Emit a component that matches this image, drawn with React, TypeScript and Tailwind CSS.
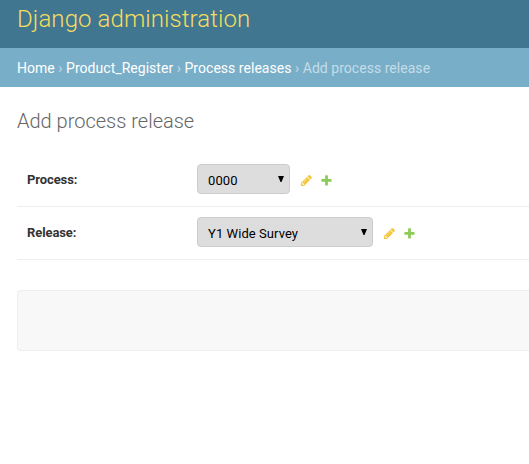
import React from "react";

function Pencil() {
  return (
    <svg width="13" height="13" viewBox="0 0 1792 1792" fill="#f4c53d" className="block">
      <path transform="translate(0 -10)" d="M491 1536l91-91-235-235-91 91v107h128v128h107zm523-928q0-22-22-22-10 0-17 7l-542 542q-7 7-7 17 0 22 22 22 10 0 17-7l542-542q7-7 7-17zm-54-192l416 416-832 832H128v-416zm683 96q0 53-37 90l-166 166-416-416 166-165q36-38 90-38 53 0 91 38l235 234q37 39 37 91z" />
    </svg>
  );
}

function Plus() {
  return (
    <svg width="13" height="13" viewBox="0 0 1792 1792" fill="#8ccb56" className="block">
      <path d="M1600 796v192q0 40-28 68t-68 28h-416v416q0 40-28 68t-68 28H800q-40 0-68-28t-28-68v-416H288q-40 0-68-28t-28-68V796q0-40 28-68t68-28h416V284q0-40 28-68t68-28h192q40 0 68 28t28 68v416h416q40 0 68 28t28 68z" />
    </svg>
  );
}

function Row({ label, value, width }: { label: string; value: string; width: string }) {
  return (
    <div className="flex h-[53px] items-start border-b border-[#eee] pl-[10px] pt-[10px]">
      <div className="w-[170px] pt-[7px] text-[13px] font-bold leading-[18px] tracking-[-0.1px] text-[#333]">{label}</div>
      <div className={`${width} flex h-[30px] items-center justify-between rounded-[4px] border border-[#ccc] bg-[#ddd] pl-[10px] pr-[5px] text-[13px] text-black`}>
        <span className="pt-[3px] leading-[18px] tracking-[0.07px]">{value}</span>
        <svg width="6" height="6" viewBox="0 0 6 6" className="mb-px"><path d="M0 0h6L3.5 6h-1z" /></svg>
      </div>
      <div className="flex gap-[7px] pl-[10px] pt-[10px]"><Pencil /><Plus /></div>
    </div>
  );
}

export default function App() {
  return (
    <div className="h-[464px] w-[529px] overflow-hidden bg-white font-['Roboto',sans-serif]">
      <header className="h-[48px] bg-[#417690] pl-[17px] pt-[4px] text-[24px] font-light leading-[30px] tracking-[0.09px] text-[#f5dd5d]">Django administration</header>
      <nav className="h-[39px] whitespace-pre bg-[#79aec8] pl-[17px] pt-[11px] text-[14px] leading-[18px] tracking-[0.035px] text-[#c4dce8]">
        <span className="text-white">Home</span> › <span className="text-white">Product_Register</span> › <span className="text-white">Process releases</span> › Add process release
      </nav>
      <main className="pl-[17px] pt-[22px]">
        <h1 className="text-[20px] font-light leading-[24px] text-[#666]">Add process release</h1>
        <div className="mt-[21px]">
          <Row label="Process:" value="0000" width="w-[93px]" />
          <Row label="Release:" value="Y1 Wide Survey" width="w-[176px]" />
        </div>
        <div className="mt-[30px] h-[61px] rounded-l-[4px] border border-r-0 border-[#eee] bg-[#f8f8f8]" />
      </main>
    </div>
  );
}
